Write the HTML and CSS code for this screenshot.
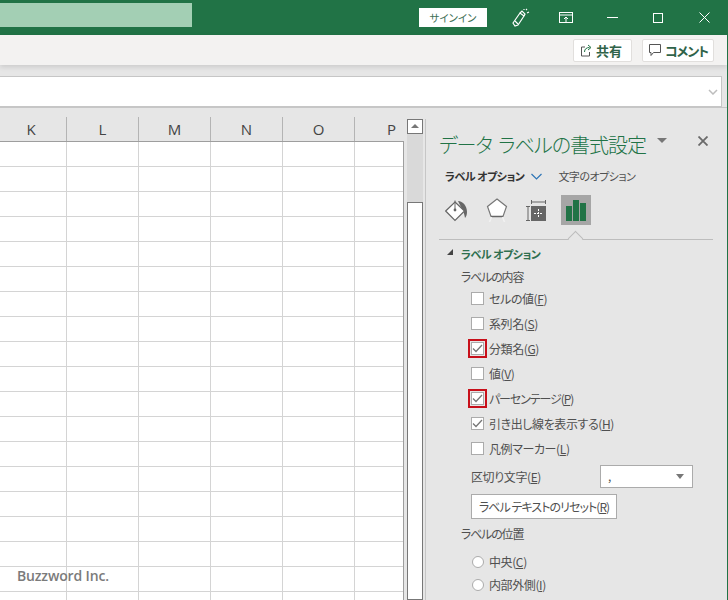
FILE: index.html
```html
<!DOCTYPE html>
<html lang="ja">

<head>
    <meta charset="UTF-8">
    <title>データ ラベルの書式設定</title>
    <link rel="stylesheet" href="styles.css">
</head>

<body>
    <header class="titlebar">
        <div class="docname"></div>
        <button class="signin">サインイン</button>
        <svg class="tb-icon pen" width="18" height="20" viewBox="0 0 18 20" fill="none" stroke="#fff" stroke-width="1.2">
            <path d="M1 15l7-10 4 3-6 9-3 1z" />
            <path d="M3 13l3 3M8 5l2-2 3 3-1 2M14 2l1-1M15 5l2-1M12 1l0 1" />
        </svg>
        <svg class="tb-icon display" width="14" height="12" viewBox="0 0 14 12" fill="none" stroke="#fff" stroke-width="1">
            <rect x="0.5" y="0.5" width="13" height="10" />
            <path d="M0.5 3h13M7 10V5M5 7l2-2 2 2" />
        </svg>
        <svg class="tb-icon min" width="11" height="11" viewBox="0 0 11 11" stroke="#fff">
            <path d="M0 5.5h11" />
        </svg>
        <svg class="tb-icon max" width="10" height="10" viewBox="0 0 10 10" fill="none" stroke="#fff">
            <rect x="0.5" y="0.5" width="9" height="9" />
        </svg>
        <svg class="tb-icon close" width="11" height="11" viewBox="0 0 11 11" stroke="#fff">
            <path d="M0.5 0.5l10 10M10.5 0.5l-10 10" />
        </svg>
    </header>

    <div class="ribbon">
        <button class="rb-btn share">
            <svg width="13" height="13" viewBox="0 0 13 13" fill="none" stroke="#555">
                <path d="M5 3H1.5v9h8V8" />
                <path d="M4.500 8c0-3 2-4.500 5-4.500M8 1l3 2.500L8 6" stroke="#217346" />
            </svg>
            共有
        </button>
        <button class="rb-btn comment">
            <svg width="12" height="13" viewBox="0 0 12 13" fill="none" stroke="#555">
                <path d="M0.500 0.500h11v8h-7l-2.500 3v-3h-1.500z" />
            </svg>
            コメント
        </button>
    </div>

    <div class="formula">
        <div class="formula-box">
            <svg width="10" height="6" viewBox="0 0 10 6" fill="none" stroke="#bdbdbd" stroke-width="1.500">
                <path d="M1 1l4 4 4-4" />
            </svg>
        </div>
    </div>

    <main class="workspace">
        <section class="sheet">
            <div class="grid">
                <div class="col-heads">
                    <div class="col-head first">K</div>
                    <div class="col-head">L</div>
                    <div class="col-head">M</div>
                    <div class="col-head">N</div>
                    <div class="col-head">O</div>
                    <div class="col-head last">P</div>
                </div>
                <div class="cells"></div>
            </div>
            <div class="vscroll">
                <div class="arrow-btn"></div>
                <div class="track"></div>
                <div class="thumb"></div>
            </div>
            <div class="watermark">Buzzword Inc.</div>
        </section>

        <div class="pane-sep"></div>

        <aside class="pane">
            <div class="pane-title">
                <h1>データ ラベルの書式設定</h1>
                <span class="title-drop"></span>
                <svg class="pane-close" width="10" height="10" viewBox="0 0 10 10" stroke="#6a6a6a" stroke-width="1.800">
                    <path d="M0.500 0.500l9 9M9.500 0.500l-9 9" />
                </svg>
            </div>

            <div class="pane-tabs">
                <span class="tab active">ラベル オプション</span>
                <svg class="tab-chevron" width="11" height="7" viewBox="0 0 11 7" fill="none" stroke="#2e75b6" stroke-width="1.200">
                    <path d="M0.500 1l5 5 5-5" />
                </svg>
                <span class="tab">文字のオプション</span>
            </div>

            <div class="pane-icons">
                <div class="pane-icon bucket">
                    <svg width="23" height="23" viewBox="0 0 23 23">
                        <path d="M13 2c5 0 9 5 9 11 0 3-1 5-2 6-.5-3-1-5-2-7z" fill="#666" />
                        <path d="M10 3l9.500 9-9.500 9.500-9.300-9.500z" fill="#fff" stroke="#666" stroke-width="1.200" />
                        <path d="M10 10V1.500" fill="none" stroke="#666" />
                        <circle cx="10" cy="11" r="1.400" fill="#666" />
                    </svg>
                </div>
                <div class="pane-icon pentagon">
                    <svg width="22" height="24" viewBox="0 0 22 24">
                        <path d="M11 1l9.500 7.500-3.500 10h-12l-3.500-10z" fill="#fff" stroke="#777" stroke-width="1.200" />
                        <path d="M5 18.500h12" fill="none" stroke="#666" stroke-width="1.500" />
                        <path d="M5.500 19l-2 5M16.500 19l2 5" fill="none" stroke="#f2f2f2" stroke-width="1.500" />
                    </svg>
                </div>
                <div class="pane-icon">
                    <svg width="22" height="22" viewBox="0 0 22 22">
                        <path d="M6.500 1v4M20.500 1v4M6.500 3h14M1 7.500h4M1 21.500h4M3 7.500v14" fill="none" stroke="#666" />
                        <rect x="6" y="7" width="15" height="15" fill="#666" />
                        <path d="M13.500 10v9M9 14.500h9" stroke="#fff" stroke-dasharray="2 1" />
                    </svg>
                </div>
                <div class="pane-icon selected">
                    <svg width="20" height="21" viewBox="0 0 20 21" fill="#217346">
                        <rect x="0" y="6" width="6" height="15" />
                        <rect x="7" y="0" width="6" height="21" />
                        <rect x="14" y="3" width="6" height="18" />
                    </svg>
                </div>
            </div>

            <div class="divider"><span class="notch"></span></div>

            <div class="section-head"><span class="collapse"></span>ラベル オプション</div>
            <div class="sub-head">ラベルの内容</div>

            <label class="check-row"><span class="box"></span>セルの値(<u>F</u>)</label>
            <label class="check-row"><span class="box"></span>系列名(<u>S</u>)</label>
            <label class="check-row"><span class="box marked"><svg width="11" height="9" viewBox="0 0 11 9" fill="none" stroke="#777" stroke-width="1.300"><path d="M1 4.500l3 3 6-6.500" /></svg></span>分類名(<u>G</u>)</label>
            <label class="check-row"><span class="box"></span>値(<u>V</u>)</label>
            <label class="check-row tight"><span class="box marked"><svg width="11" height="9" viewBox="0 0 11 9" fill="none" stroke="#777" stroke-width="1.300"><path d="M1 4.500l3 3 6-6.500" /></svg></span>パーセンテージ(<u>P</u>)</label>
            <label class="check-row"><span class="box"><svg width="11" height="9" viewBox="0 0 11 9" fill="none" stroke="#777" stroke-width="1.300"><path d="M1 4.500l3 3 6-6.500" /></svg></span>引き出し線を表示する(<u>H</u>)</label>
            <label class="check-row"><span class="box"></span>凡例マーカー(<u>L</u>)</label>

            <div class="sep-row">
                <span>区切り文字(<u>E</u>)</span>
                <div class="select">,<span class="select-arrow"></span></div>
            </div>

            <button class="reset">ラベル テキストのリセット(<u>R</u>)</button>

            <div class="sub-head pos-head">ラベルの位置</div>

            <label class="radio-row first"><span class="radio"></span>中央(<u>C</u>)</label>
            <label class="radio-row"><span class="radio"></span>内部外側(<u>I</u>)</label>
        </aside>
    </main>
</body>

</html>
```

FILE: styles.css
```css
* {
    box-sizing: border-box;
}

html,
body {
    margin: 0;
    height: 100%;
}

body {
    width: 728px;
    height: 600px;
    overflow: hidden;
    position: relative;
    background-color: #e6e6e6;
    border-right: 1px solid #217346;
    font-family: "Noto Sans CJK JP", "Liberation Sans", sans-serif;
    font-feature-settings: "palt";
    font-size: 12px;
    letter-spacing: -0.4px;
    color: #505050;
}

button {
    font-family: inherit;
    font-feature-settings: inherit;
    letter-spacing: inherit;
    margin: 0;
}

u {
    text-underline-offset: 1px;
}

/* title bar */
.titlebar {
    height: 35px;
    background-color: #217346;
    display: flex;
    align-items: center;
}

.docname {
    width: 192px;
    height: 24px;
    background-color: #a3cfb4;
    margin-top: -5px;
}

.signin {
    width: 68px;
    height: 19px;
    margin-left: 227px;
    margin-top: -1px;
    border: 0;
    padding: 0;
    background-color: #fff;
    color: #3d6f55;
    font-size: 10.5px;
    letter-spacing: 0;
    line-height: 19px;
}

.tb-icon {
    flex: none;
}

.pen {
    margin-left: 25px;
}

.display {
    margin-left: 29px;
}

.min {
    margin-left: 34px;
}

.max {
    margin-left: 35px;
}

.close {
    margin-left: 36px;
}

/* ribbon */
.ribbon {
    height: 30px;
    background-color: #f3f2f1;
    display: flex;
    justify-content: flex-end;
    align-items: center;
    gap: 10px;
    padding-right: 13px;
    box-shadow: 0 2px 5px rgba(0, 0, 0, 0.12);
    position: relative;
}

.rb-btn {
    height: 23px;
    border: 1px solid #e1dfdd;
    border-radius: 2px;
    background-color: #fff;
    color: #2f6349;
    font-size: 13px;
    font-weight: 700;
    letter-spacing: 0;
    padding: 0;
    display: flex;
    align-items: center;
}

.share {
    width: 59px;
    padding-left: 6px;
    gap: 3px;
}

.comment {
    width: 72px;
    padding-left: 6px;
    gap: 4px;
    letter-spacing: -1px;
}

/* formula bar */
.formula {
    height: 42px;
    padding: 11px 5px 0 0;
}

.formula-box {
    height: 31px;
    margin-left: -2px;
    border: 1px solid #c6c6c6;
    background-color: #fff;
    display: flex;
    justify-content: flex-end;
    align-items: center;
    padding-right: 3px;
}

/* sheet */
.workspace {
    display: flex;
    height: 493px;
    border-top: 1px solid #c6c6c6;
}

.sheet {
    width: 425px;
    display: flex;
}

.grid {
    width: 404px;
    display: flex;
    flex-direction: column;
}

.col-heads {
    display: flex;
    height: 33px;
    padding-top: 9px;
    flex: none;
}

.col-head {
    width: 72px;
    border-right: 1px solid #b4b4b4;
    text-align: center;
    font-family: "Open Sans", "Liberation Sans", sans-serif;
    font-size: 15px;
    letter-spacing: 0;
    line-height: 24px;
    color: #444;
}

.col-head.first {
    width: 67px;
    padding-right: 4px;
}

.col-head.last {
    border-right: 0;
    width: 49px;
    text-align: right;
    padding-right: 8px;
}

.cells {
    flex: 1;
    background-color: #fff;
    border-top: 1px solid #9e9e9e;
    border-right: 1px solid #9e9e9e;
    background-image:
        linear-gradient(to right, #d4d4d4 1px, transparent 1px),
        linear-gradient(to bottom, #d4d4d4 1px, transparent 1px);
    background-size: 72px 25px;
    background-position: 66px 0, 0 24px;
}

.vscroll {
    width: 16px;
    margin-left: 3px;
    padding-top: 11px;
    display: flex;
    flex-direction: column;
}

.arrow-btn {
    height: 15px;
    background-color: #fff;
    border: 1px solid #777;
    position: relative;
    flex: none;
}

.arrow-btn::after {
    content: "";
    position: absolute;
    left: 3px;
    top: 4px;
    border-left: 4px solid transparent;
    border-right: 4px solid transparent;
    border-bottom: 4px solid #777;
}

.track {
    height: 68px;
    flex: none;
    background-color: #d9d9d9;
}

.thumb {
    flex: 1;
    background-color: #fff;
    border: 1px solid #777;
}

.watermark {
    position: absolute;
    left: 17px;
    top: 566px;
    font-family: "Open Sans", "Liberation Sans", sans-serif;
    font-size: 14px;
    font-weight: 600;
    letter-spacing: -0.15px;
    color: #7b7b7b;
}

/* task pane */
.pane-sep {
    width: 1px;
    margin-top: 11px;
    background-color: #c6c6c6;
}

.pane {
    width: 301px;
    padding: 25px 14px 0 13px;
}

.pane-title {
    display: flex;
    align-items: center;
    height: 24px;
}

.pane-title h1 {
    margin: 0;
    width: 208px;
    font-size: 20px;
    font-weight: 300;
    letter-spacing: -1px;
    word-spacing: 3px;
    line-height: 24px;
    color: #217346;
    white-space: nowrap;
}

.title-drop {
    margin-left: 10px;
    margin-top: -9px;
    border-left: 5px solid transparent;
    border-right: 5px solid transparent;
    border-top: 5px solid #777;
}

.pane-close {
    margin-left: 31px;
    margin-top: -9px;
}

.pane-tabs {
    display: flex;
    align-items: center;
    height: 18px;
    margin-top: 10px;
    padding-left: 6px;
}

.tab {
    font-size: 11px;
    letter-spacing: -0.5px;
    color: #505050;
    white-space: nowrap;
}

.tab.active {
    font-weight: 700;
    color: #333;
}

.tab-chevron {
    margin: 0 16px 0 7px;
}

.pane-icons {
    display: flex;
    align-items: center;
    height: 30px;
    margin-top: 10px;
    padding-left: 6px;
}

.pane-icon {
    height: 30px;
    display: flex;
    align-items: center;
    margin-right: 17px;
}

.pane-icon.bucket {
    margin-right: 18px;
}

.pane-icon.selected {
    width: 30px;
    margin: 0 0 0 -3px;
    justify-content: center;
    background-color: #a6a6a6;
}

.divider {
    height: 1px;
    margin-top: 14px;
    background-color: #bdbdbd;
    position: relative;
}

.notch {
    position: absolute;
    left: 131px;
    top: -6px;
    width: 11px;
    height: 11px;
    background-color: #e6e6e6;
    border-left: 1px solid #bdbdbd;
    border-top: 1px solid #bdbdbd;
    transform: rotate(45deg);
}

.section-head {
    display: flex;
    align-items: center;
    height: 22px;
    margin-top: 3px;
    padding-left: 8px;
    font-size: 11px;
    font-weight: 700;
    letter-spacing: -0.5px;
    color: #2f6f4f;
}

.collapse {
    width: 0;
    height: 0;
    margin-right: 8px;
    border-left: 6px solid transparent;
    border-bottom: 6px solid #444;
    margin-top: -4px;
}

.sub-head {
    height: 19px;
    line-height: 20px;
    margin-top: 2px;
    padding-left: 22px;
    letter-spacing: -1.2px;
}

.check-row,
.radio-row {
    display: flex;
    align-items: center;
    height: 25px;
    padding-left: 32px;
    white-space: nowrap;
}

.check-row.tight {
    letter-spacing: -1.100px;
}

.box {
    width: 13px;
    height: 13px;
    margin-right: 5px;
    flex: none;
    background-color: #fff;
    border: 1px solid #ababab;
    display: flex;
    align-items: center;
    justify-content: center;
}

.box.marked {
    outline: 2px solid #c8101a;
    outline-offset: 1px;
}

.sep-row {
    display: flex;
    align-items: center;
    justify-content: space-between;
    height: 23px;
    margin: 4px 20px 0 32px;
}

.select {
    width: 93px;
    height: 23px;
    border: 1px solid #ababab;
    background-color: #fff;
    padding-left: 7px;
    line-height: 20px;
    position: relative;
}

.select-arrow {
    position: absolute;
    right: 8px;
    top: 8px;
    border-left: 4px solid transparent;
    border-right: 4px solid transparent;
    border-top: 5px solid #777;
}

.reset {
    display: block;
    width: 146px;
    height: 25px;
    margin: 6px 0 0 32px;
    padding: 0;
    border: 1px solid #ababab;
    background-color: #fff;
    color: #505050;
    font-size: 12px;
    letter-spacing: -0.95px;
    white-space: nowrap;
}

.pos-head {
    margin-top: 5px;
}

.radio-row {
    height: 23px;
}

.radio-row.first {
    margin-top: 7px;
}

.radio {
    width: 12px;
    height: 12px;
    margin: 0 5px 0 1px;
    border: 1px solid #ababab;
    border-radius: 50%;
    background-color: #fff;
    flex: none;
}
```
